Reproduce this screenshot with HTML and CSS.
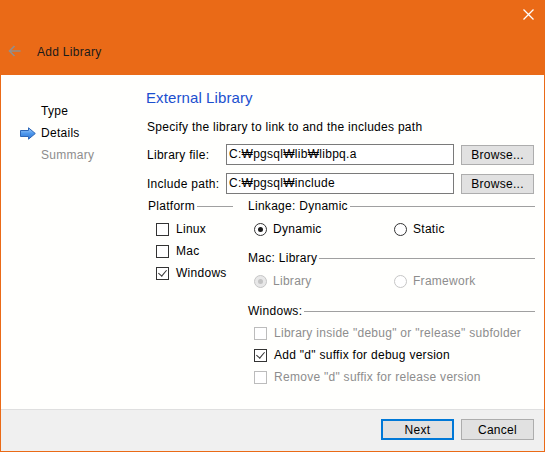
FILE: index.html
```html
<!DOCTYPE html>
<html>
<head>
<meta charset="utf-8">
<link rel="stylesheet" href="styles.css">
</head>
<body>
<div class="window">
  <header class="header">
    <div class="close" aria-label="Close">
      <svg width="11" height="11" viewBox="0 0 11 11"><path d="M0.5 0.5L10.5 10.5M10.5 0.5L0.5 10.5" stroke="#fff" stroke-width="1.3" fill="none"/></svg>
    </div>
    <div class="title-row">
      <svg class="back" width="13" height="12" viewBox="0 0 13 12"><path d="M12.5 6H1.5M6.5 1L1.5 6L6.5 11" stroke="#8f8f8f" stroke-width="1.6" fill="none"/></svg>
      <span class="title">Add Library</span>
    </div>
  </header>
  <main class="body">
    <nav class="nav">
      <div class="step">Type</div>
      <div class="step current">
        <svg class="step-arrow" width="16" height="13" viewBox="0 0 16 13">
          <defs><linearGradient id="g" x1="0" y1="0" x2="0" y2="1"><stop offset="0" stop-color="#a9d0fb"/><stop offset="0.5" stop-color="#4d97ec"/><stop offset="1" stop-color="#2f74d0"/></linearGradient></defs>
          <path d="M0.5 3.5H8.5V0.8L15.3 6.5L8.5 12.2V9.5H0.5Z" fill="url(#g)" stroke="#2d67b8" stroke-width="1"/>
        </svg>
        Details
      </div>
      <div class="step future">Summary</div>
    </nav>
    <section class="pane">
      <h1 class="heading">External Library</h1>
      <p class="intro">Specify the library to link to and the includes path</p>
      <div class="field-row">
        <label class="field-label">Library file:</label>
        <div class="input">C:₩pgsql₩lib₩libpq.a</div>
        <div class="btn">Browse...</div>
      </div>
      <div class="field-row second">
        <label class="field-label">Include path:</label>
        <div class="input">C:₩pgsql₩include</div>
        <div class="btn">Browse...</div>
      </div>
      <div class="groups">
        <div class="platform">
          <div class="group-title">Platform</div>
          <div class="items">
            <div class="item"><span class="cb"></span>Linux</div>
            <div class="item"><span class="cb"></span>Mac</div>
            <div class="item"><span class="cb checked"></span>Windows</div>
          </div>
        </div>
        <div class="options">
          <div class="group-title">Linkage: Dynamic</div>
          <div class="radio-row">
            <div class="item"><span class="rb on"></span>Dynamic</div>
            <div class="item"><span class="rb"></span>Static</div>
          </div>
          <div class="group-title mac">Mac: Library</div>
          <div class="radio-row">
            <div class="item disabled"><span class="rb on"></span>Library</div>
            <div class="item disabled"><span class="rb"></span>Framework</div>
          </div>
          <div class="group-title win">Windows:</div>
          <div class="win-items">
            <div class="item disabled"><span class="cb"></span>Library inside "debug" or "release" subfolder</div>
            <div class="item"><span class="cb checked"></span>Add "d" suffix for debug version</div>
            <div class="item disabled"><span class="cb"></span>Remove "d" suffix for release version</div>
          </div>
        </div>
      </div>
    </section>
  </main>
  <footer class="footer">
    <div class="btn default">Next</div>
    <div class="btn">Cancel</div>
  </footer>
</div>
</body>
</html>
```

FILE: styles.css
```css
* { box-sizing: border-box; margin: 0; padding: 0; }
html, body { width: 545px; height: 452px; overflow: hidden; }
body {
  font-family: "Liberation Sans", "DejaVu Sans", Arial, sans-serif;
  font-size: 12px;
  letter-spacing: 0.28px;
  color: #000;
  background: #fff;
}
.window {
  width: 545px;
  height: 452px;
  border: 1px solid #ea6a17;
  border-top: none;
  display: flex;
  flex-direction: column;
  background: #fffffd;
}
.header {
  height: 75px;
  background: #ea6a17;
  position: relative;
  display: flex;
  flex-direction: column;
  justify-content: flex-end;
}
.close {
  position: absolute;
  top: 9px;
  right: 10px;
  width: 11px;
  height: 11px;
  display: flex;
}
.title-row {
  height: 20px;
  margin-bottom: 13px;
  display: flex;
  align-items: center;
  padding-left: 7px;
}
.back { display: block; margin-top: -2px; }
.title {
  margin-left: 16px;
  font-size: 12px;
  color: #1a1a1a;
}
.body {
  flex: 1;
  display: flex;
}
.nav {
  width: 145px;
  padding-top: 25px;
  padding-left: 40px;
}
.step {
  height: 22px;
  line-height: 22px;
  position: relative;
}
.step.future { color: #8d8d8d; }
.step-arrow {
  position: absolute;
  left: -21px;
  top: 5px;
}
.pane {
  flex: 1;
  padding-top: 12px;
}
.heading {
  font-size: 15px;
  font-weight: normal;
  letter-spacing: 0.1px;
  color: #1c4fcf;
  line-height: 22px;
}
.intro {
  margin-top: 10px;
  line-height: 16px;
  padding-left: 1px;
}
.field-row {
  margin-top: 9px;
  display: flex;
  align-items: center;
  height: 21px;
  padding-left: 1px;
}
.field-row.second { margin-top: 8px; }
.field-label { width: 79px; }
.input {
  width: 228px;
  height: 21px;
  border: 1px solid #7a7a7a;
  background: #fff;
  padding-left: 2px;
  line-height: 19px;
  white-space: nowrap;
}
.btn {
  width: 73px;
  height: 21px;
  margin-left: 7px;
  background: #e1e1e1;
  border: 1px solid #adadad;
  display: flex;
  align-items: center;
  justify-content: center;
}
.field-row .btn { height: 20px; margin-top: 1px; }
.groups {
  margin-top: 4px;
  display: flex;
  padding-left: 2px;
}
.platform { width: 85px; }
.options { width: 287px; margin-left: 15px; }
.group-title {
  display: flex;
  align-items: center;
  height: 16px;
  white-space: nowrap;
}
.group-title::after {
  content: "";
  flex: 1;
  height: 1px;
  background: #a0a0a0;
  margin-left: 2px;
  margin-top: 1px;
}
.items { margin-top: 4px; padding-left: 8px; }
.item {
  height: 22px;
  display: flex;
  align-items: center;
  white-space: nowrap;
}
.item.disabled { color: #8d8d8d; }
.cb {
  width: 13px;
  height: 13px;
  border: 1px solid #333;
  background: #fff;
  margin-right: 7px;
  position: relative;
  flex: none;
}
.item.disabled .cb { border-color: #bcbcbc; }
.cb.checked::after {
  content: "";
  position: absolute;
  left: 3px;
  top: 0px;
  width: 4px;
  height: 7px;
  border-right: 1.5px solid #333;
  border-bottom: 1.5px solid #333;
  transform: rotate(40deg);
}
.rb {
  width: 13px;
  height: 13px;
  border-radius: 50%;
  border: 1px solid #333;
  background: #fff;
  margin-right: 6px;
  position: relative;
  flex: none;
}
.rb.on::after {
  content: "";
  position: absolute;
  left: 3px;
  top: 3px;
  width: 5px;
  height: 5px;
  border-radius: 50%;
  background: #1a1a1a;
}
.item.disabled .rb { border-color: #c6c6c6; background: #fff; }
.item.disabled .rb.on { background: #e8e8e8; }
.item.disabled .rb.on::after { background: #c4c4c4; }
.radio-row {
  margin-top: 4px;
  padding-left: 6px;
  display: grid;
  grid-template-columns: 140px 1fr;
}
.group-title.mac { margin-top: 10px; }
.group-title.win { margin-top: 11px; }
.win-items { margin-top: 3px; padding-left: 6px; }
.footer {
  height: 42px;
  background: #f0f0f0;
  border-top: 1px solid #dfdfdf;
  display: flex;
  justify-content: flex-end;
  align-items: flex-start;
  padding-top: 9px;
  padding-right: 10px;
}
.footer .btn { height: 21px; }
.btn.default { border: 2px solid #0078d7; }
```
